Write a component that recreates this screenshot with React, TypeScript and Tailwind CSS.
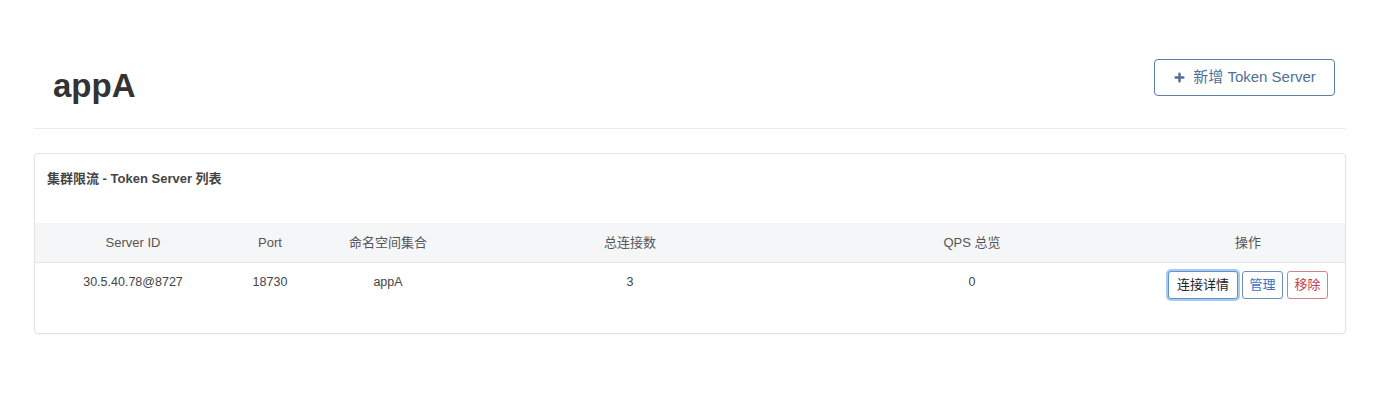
import { Plus } from 'lucide-react'

const font = { fontFamily: '"Liberation Sans", "Noto Sans CJK SC", sans-serif' }

const columns = [
  { label: 'Server ID', w: 'w-[196px]' },
  { label: 'Port', w: 'w-[78px]' },
  { label: '命名空间集合', w: 'w-[158px]' },
  { label: '总连接数', w: 'w-[326px]' },
  { label: 'QPS 总览', w: 'w-[358px]' },
  { label: '操作', w: 'w-[194px]' },
]

const servers = [{ id: '30.5.40.78@8727', port: 18730, ns: 'appA', conn: 3, qps: 0 }]

export default function App() {
  return (
    <div className="w-[1386px] h-[406px] bg-white text-[#333]" style={font}>
      <div className="pl-[34px] pr-[40px] pt-[59px]">
        {/* Header */}
        <div className="flex items-start justify-between pr-[11px]">
          <h1 className="pl-[19px] pt-[10px] text-[33px] font-bold leading-[34px] text-[#333]">appA</h1>
          <button className="h-[37px] w-[181px] flex items-center justify-center gap-[7px] rounded border border-[#5b7fa8] text-[#4f6f96] text-[15px] bg-white">
            <Plus size={13} strokeWidth={4.5} color="#4f6f96" />
            <span>新增 Token Server</span>
          </button>
        </div>
        <div className="mt-[25px] border-t border-[#ececec]" />

        {/* Panel */}
        <div className="mt-[24px] border border-[#e3e3e3] rounded-[4px] shadow-[0_1px_2px_rgba(0,0,0,0.04)] h-[181px]">
          <div className="px-[12px] pt-[15px] h-[69px] text-[13px] font-bold text-[#444]">集群限流 - Token Server 列表</div>
          <div className="flex bg-[#f5f6f8] h-[40px] items-center border-b border-[#e6e6e6] text-[13px] text-[#555]">
            {columns.map(c => (
              <div key={c.label} className={`${c.w} text-center`}>{c.label}</div>
            ))}
          </div>
          {servers.map(s => (
            <div key={s.id} className="flex h-[38px] items-center text-[12.5px] text-[#444]">
              <div className="w-[196px] text-center">{s.id}</div>
              <div className="w-[78px] text-center">{s.port}</div>
              <div className="w-[158px] text-center">{s.ns}</div>
              <div className="w-[326px] text-center">{s.conn}</div>
              <div className="w-[358px] text-center">{s.qps}</div>
              <div className="w-[194px] flex justify-center gap-[4px] pt-[6px]">
                <button className="h-[28px] w-[70px] rounded-[3px] border border-[#5e93d4] ring-2 ring-[#a9c9ee] text-[13px] text-[#222] bg-white">连接详情</button>
                <button className="h-[28px] w-[41px] rounded-[3px] border border-[#6d8fba] text-[13px] text-[#3b6fc4] bg-white">管理</button>
                <button className="h-[28px] w-[41px] rounded-[3px] border border-[#d0838f] text-[13px] text-[#c2404f] bg-white">移除</button>
              </div>
            </div>
          ))}
        </div>
      </div>
    </div>
  )
}
